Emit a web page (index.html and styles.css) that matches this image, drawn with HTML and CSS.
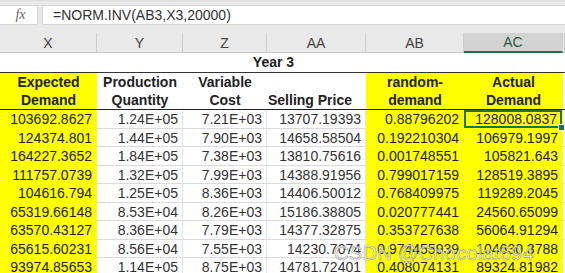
FILE: index.html
```html
<!DOCTYPE html>
<html lang="en">
<head>
    <meta charset="UTF-8">
    <meta name="viewport" content="width=device-width, initial-scale=1.0">
    <title>Year 3 simulation</title>
    <link rel="stylesheet" href="styles.css">
</head>
<body>

    <div class="formula-bar">
        <div class="fx-box"><span class="fx">fx</span></div>
        <div class="formula">=NORM.INV(AB3,X3,20000)</div>
    </div>

    <div class="sheet">
        <div class="row col-heads">
            <div class="col-head">X</div>
            <div class="col-head">Y</div>
            <div class="col-head">Z</div>
            <div class="col-head">AA</div>
            <div class="col-head">AB</div>
            <div class="col-head active">AC</div>
            <div class="col-head"></div>
        </div>

        <div class="title-row">Year 3</div>

        <div class="row head-row">
            <div class="head yellow">Expected<br>Demand</div>
            <div class="head">Production<br>Quantity</div>
            <div class="head">Variable<br>Cost</div>
            <div class="head left">Selling Price</div>
            <div class="head yellow red">random-<br>demand</div>
            <div class="head yellow">Actual<br>Demand</div>
            <div class="head"></div>
        </div>

        <!-- data rows -->
        <div class="row"><div class="cell yellow">103692.8627</div><div class="cell">1.24E+05</div><div class="cell">7.21E+03</div><div class="cell">13707.19393</div><div class="cell yellow">0.88796202</div><div class="cell yellow selected">128008.0837</div><div class="cell"></div></div>
        <div class="row"><div class="cell yellow">124374.801</div><div class="cell">1.44E+05</div><div class="cell">7.90E+03</div><div class="cell">14658.58504</div><div class="cell yellow">0.192210304</div><div class="cell yellow">106979.1997</div><div class="cell"></div></div>
        <div class="row"><div class="cell yellow">164227.3652</div><div class="cell">1.84E+05</div><div class="cell">7.38E+03</div><div class="cell">13810.75616</div><div class="cell yellow">0.001748551</div><div class="cell yellow">105821.643</div><div class="cell"></div></div>
        <div class="row"><div class="cell yellow">111757.0739</div><div class="cell">1.32E+05</div><div class="cell">7.99E+03</div><div class="cell">14388.91956</div><div class="cell yellow">0.799017159</div><div class="cell yellow">128519.3895</div><div class="cell"></div></div>
        <div class="row"><div class="cell yellow">104616.794</div><div class="cell">1.25E+05</div><div class="cell">8.36E+03</div><div class="cell">14406.50012</div><div class="cell yellow">0.768409975</div><div class="cell yellow">119289.2045</div><div class="cell"></div></div>
        <div class="row"><div class="cell yellow">65319.66148</div><div class="cell">8.53E+04</div><div class="cell">8.26E+03</div><div class="cell">15186.38805</div><div class="cell yellow">0.020777441</div><div class="cell yellow">24560.65099</div><div class="cell"></div></div>
        <div class="row"><div class="cell yellow">63570.43127</div><div class="cell">8.36E+04</div><div class="cell">7.79E+03</div><div class="cell">14377.32875</div><div class="cell yellow">0.353727638</div><div class="cell yellow">56064.91294</div><div class="cell"></div></div>
        <div class="row"><div class="cell yellow">65615.60231</div><div class="cell">8.56E+04</div><div class="cell">7.55E+03</div><div class="cell">14230.7074</div><div class="cell yellow">0.974455939</div><div class="cell yellow">104630.3788</div><div class="cell"></div></div>
        <div class="row"><div class="cell yellow">93974.85653</div><div class="cell">1.14E+05</div><div class="cell">8.75E+03</div><div class="cell">14781.72401</div><div class="cell yellow">0.408074131</div><div class="cell yellow">89324.81982</div><div class="cell"></div></div>
    </div>

    <div class="watermark">CSDN @Chocolat694</div>

</body>
</html>
```

FILE: styles.css
```css
* { box-sizing: border-box; }
body { margin: 0; width: 565px; height: 273px; overflow: hidden; font-family: "Liberation Sans", Arial, sans-serif; color: #222; background: #fff; position: relative; }

/* formula bar */
.formula-bar { display: flex; gap: 4px; height: 32px; padding: 4px 0 7px 0; background: #e9e9e9; border-top: 1px solid #dcdcdc; }
.fx-box { width: 38px; background: #fff; border: 1px solid #d4d4d4; border-left: none; display: flex; align-items: center; justify-content: center; }
.fx { font-family: "Liberation Serif", serif; font-style: italic; font-size: 14px; color: #666; padding-left: 4px; }
.formula { flex: 1; background: #fff; border: 1px solid #d4d4d4; border-right: none; font-size: 14px; color: #333; padding-left: 10px; line-height: 19px; }

/* grid */
.row { display: grid; grid-template-columns: 97px 86px 84px 99px 98px 99px 2px; }
.col-heads { height: 21px; background: #e9e9e9; border-bottom: 1px solid #c8c8c8; }
.col-head { font-size: 14px; color: #444; text-align: center; line-height: 20px; border-right: 1px solid #cdcdcd; margin-top: 1px; }
.col-head.active { background: #d3d3d3; color: #2a5a3c; border-bottom: 2px solid #217346; line-height: 18px; }

.title-row { height: 19px; font-weight: bold; font-size: 14px; text-align: center; padding-right: 18px; line-height: 19px; }

.head-row { border-top: 1px solid #333; border-bottom: 1px solid #222; height: 38px; }
.head { font-weight: bold; font-size: 14px; line-height: 18px; text-align: center; display: flex; flex-direction: column; justify-content: flex-end; }
.head.left { text-align: left; padding-left: 1px; }
.red { color: #ff0000; }

.cell { height: 18.5px; font-size: 14px; line-height: 18px; text-align: right; padding-right: 4px; border-right: 1px solid #e6e6e6; border-bottom: 1px solid #dadada; color: #333; white-space: nowrap; }
.yellow { background: #ffff00; color: #222; }
.cell.yellow { border-color: #ffff00; }

.selected { position: relative; box-shadow: inset 0 0 0 2px #217346; padding-right: 5px; }
.selected::after { content: ""; position: absolute; right: -3px; bottom: -3px; width: 5px; height: 5px; background: #217346; border: 1px solid #fff; }

.watermark { position: absolute; left: 334px; top: 242px; font-size: 20px; color: rgba(255, 255, 255, 0.8); -webkit-text-stroke: 0.7px rgba(120, 120, 120, 0.7); letter-spacing: 0.3px; }
```
